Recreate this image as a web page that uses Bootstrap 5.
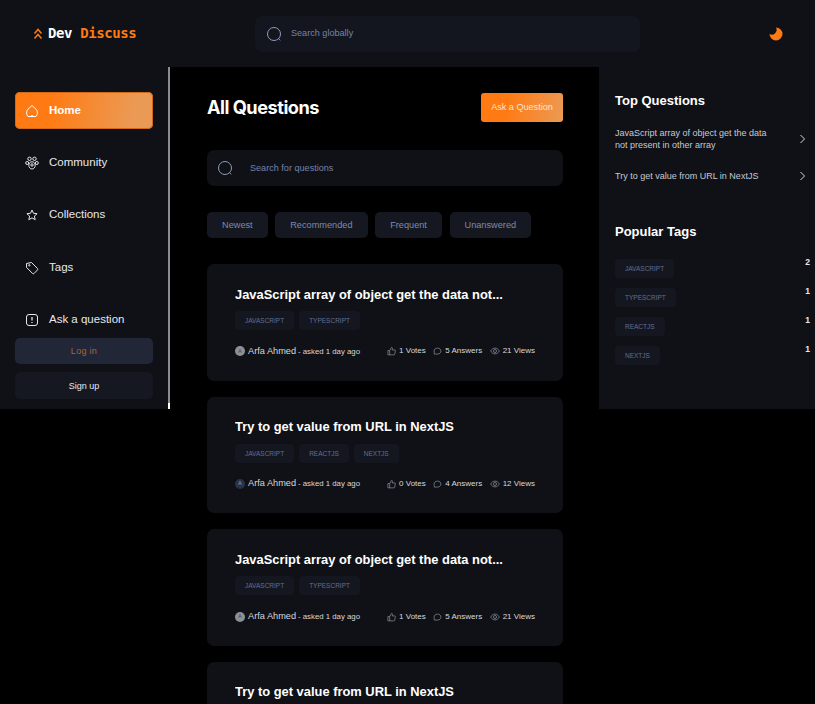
<!DOCTYPE html>
<html lang="en">

<head>
  <meta charset="UTF-8" />
  <meta name="viewport" content="width=device-width, initial-scale=1" />
  <title>Dev Discuss</title>
  <link href="https://cdn.jsdelivr.net/npm/bootstrap@5.3.0/dist/css/bootstrap.min.css" rel="stylesheet" />
  <style>
    body {
      background-color: #000;
      color: #fff;
      font-family: "Liberation Sans", Arial, sans-serif;
      overflow: hidden;
      height: 704px;
    }

    .topbar {
      height: 67px;
      background-color: #0f1117;
      padding-left: 33px;
    }

    .logo-box {
      width: 222px;
      gap: 5px;
      font-family: "DejaVu Sans Mono", monospace;
      font-weight: 700;
      font-size: 14px;
      letter-spacing: -.4px;
    }

    .accent-text {
      color: #ff7a12;
    }

    .global-search {
      width: 385px;
      height: 36px;
      border-radius: 7px;
      background-color: #13161f;
      padding-left: 11px;
      gap: 9px;
    }

    .search-hint {
      font-size: 9.1px;
      color: #7482aa;
    }

    .moon-box {
      margin-left: 129px;
    }

    .side-left {
      width: 170px;
      height: 342px;
      flex: none;
      background-color: #0f1117;
      border-right: 2px solid #8b8c91;
      border-image: linear-gradient(#8b8c91 98%, #fff 98%) 1;
      padding: 25px 15px 0;
    }

    .side-link {
      height: 37px;
      margin-bottom: 15px;
      padding-left: 10px;
      gap: 10px;
      font-size: 11.5px;
      color: #e6e8ee;
      border-radius: 5px;
    }

    .side-link.is-active {
      background: linear-gradient(100deg, #ff7a12 25%, #eb9a55 85%);
      color: #fff;
      font-weight: 700;
      box-shadow: inset 0 0 0 1px #d06a18;
    }

    .side-link.tags-link {
      margin-top: 16px;
    }

    .side-link.last-link {
      margin-bottom: 0;
    }

    .auth-btn {
      font-size: 9px;
      border-radius: 5px;
      height: 26px;
      padding: 0;
      border: 0;
      line-height: 26px;
    }

    .auth-login {
      background-color: #212736;
      color: #a8643a;
      letter-spacing: .3px;
      margin-bottom: 8px;
    }

    .auth-signup {
      background-color: #151821;
      color: #e6e8ee;
      height: 27px;
    }

    .main-col {
      width: 429px;
      flex: none;
      padding: 26px 36px 0 37px;
    }

    .page-title {
      font-family: Inter, sans-serif;
      font-size: 18.2px;
      font-weight: 700;
      letter-spacing: -.5px;
      margin: 1px 0 0;
    }

    .ask-btn {
      width: 82px;
      height: 29px;
      padding: 0;
      border: 0;
      border-radius: 3px;
      font-size: 9.1px;
      color: #fde3cc;
      background: linear-gradient(100deg, #ff7a12 30%, #eb9a55 100%);
    }

    .question-search {
      height: 36px;
      border-radius: 7px;
      background-color: #0f1117;
      margin-top: 28px;
      padding-left: 10px;
      gap: 17px;
    }

    .question-search .search-hint {
      padding-top: 2px;
    }

    .filter-row {
      margin-top: 26px;
      margin-bottom: 26px;
      gap: 7.6px;
    }

    .filter-chip {
      height: 26px;
      line-height: 26px;
      padding: 0 15px;
      border-radius: 5px;
      background-color: #151821;
      color: #7f8aa8;
      font-size: 9.2px;
    }

    .question-item {
      height: 116.67px;
      background-color: #0f1117;
      border: 0;
      border-radius: 7px;
      margin-bottom: 16px;
      padding: 21.5px 28px 0;
      color: #fff;
    }

    .question-title {
      font-size: 12.9px;
      font-weight: 700;
      line-height: 18px;
      margin: 0 0 7.5px;
    }

    .tag-chip {
      display: inline-block;
      height: 19px;
      line-height: 19px;
      padding: 0 10px;
      border-radius: 4px;
      background-color: #141720;
      color: #636e92;
      font-size: 6.5px;
      text-transform: uppercase;
    }

    .tag-line {
      gap: 5px;
    }

    .meta-row {
      margin-top: 14.5px;
      font-size: 7.8px;
      color: #d6d8de;
    }

    .avatar-dot {
      width: 10px;
      height: 10px;
      border-radius: 50%;
      background-color: #8d9098;
      color: #3c3f47;
      font-size: 5px;
      margin-right: 3px;
    }

    .avatar-dark {
      background-color: #2c3244;
      color: #9aa3bb;
    }

    .author-name {
      font-size: 9.2px;
      margin-right: 2px;
    }

    .stat-group {
      gap: 7.5px;
      font-size: 8px;
    }

    .stat-item {
      gap: 3px;
    }

    .side-right {
      width: 216px;
      height: 342px;
      flex: none;
      background-color: #0f1117;
      padding: 25px 5px 0 16px;
    }

    .side-heading {
      font-size: 13px;
      font-weight: 700;
      line-height: 17px;
      margin: 0;
    }

    .top-link {
      font-size: 9px;
      line-height: 12px;
      color: #c6c9d2;
      padding-right: 4px;
    }

    .top-link span {
      width: 165px;
    }

    .top-first {
      margin-top: 18px;
    }

    .top-second {
      margin-top: 19px;
    }

    .popular-heading {
      margin-top: 41px;
    }

    .count-num {
      font-size: 8.5px;
      line-height: 12px;
      color: #e6e8ee;
      font-weight: 700;
      margin-top: -3px;
    }

    .pop-row {
      height: 18px;
      margin-bottom: 11px;
    }

    .pop-first {
      margin-top: 19px;
    }
  </style>
</head>

<body>
  <header class="topbar d-flex align-items-center">
    <div class="logo-box d-flex align-items-center">
      <svg width="10" height="12" viewBox="0 0 10 12" fill="none" stroke="#ff7a12" stroke-width="1.5">
        <path d="M1.5 5.5 5 1.5l3.5 4M1.5 10.5 5 6.5l3.5 4" />
      </svg>
      <span>Dev <span class="accent-text">Discuss</span></span>
    </div>
    <div class="global-search d-flex align-items-center">
      <svg width="16" height="16" viewBox="0 0 16 16" fill="none" stroke="#8d9bb8" stroke-width="1">
        <circle cx="8" cy="8" r="6.5" />
        <path d="m12.6 12.6 1.6 1.8" />
      </svg>
      <span class="search-hint">Search globally</span>
    </div>
    <div class="moon-box d-flex">
      <svg width="14" height="14" viewBox="0 0 14 14">
        <path fill="#ff7a12" d="M7 .5A6.500 6.500 0 1 1 .5 7 4.800 4.800 0 0 0 7 .5Z" />
      </svg>
    </div>
  </header>

  <div class="d-flex align-items-start">
    <aside class="side-left">
      <div class="side-link is-active d-flex align-items-center">
        <svg width="14" height="14" viewBox="0 0 14 14" fill="none" stroke="#fff" stroke-width="1">
          <path d="M7 1.500 11.800 6c1 2.500.6 5-.8 6.500H3C1.600 11 1.200 8.500 2.200 6ZM5.500 12.300c.5-.9 2.500-.9 3 0" />
        </svg>
        <span>Home</span>
      </div>
      <div class="side-link d-flex align-items-center">
        <svg width="14" height="14" viewBox="0 0 14 14" fill="none" stroke="#e6e8ee" stroke-width="1">
          <circle cx="4.500" cy="2.800" r="1.700" />
          <circle cx="9.500" cy="2.800" r="1.700" />
          <circle cx="2.200" cy="7" r="1.500" />
          <circle cx="11.800" cy="7" r="1.500" />
          <path d="M7 5.800c2 0 3.200 1.500 3.200 3.500S8.900 13 7 13 3.800 11.300 3.800 9.300 5 5.800 7 5.800Z" />
          <circle cx="7" cy="9" r="1.200" />
        </svg>
        <span>Community</span>
      </div>
      <div class="side-link d-flex align-items-center mb-0">
        <svg width="14" height="14" viewBox="0 0 14 14" fill="none" stroke="#e6e8ee" stroke-width="1">
          <path d="m7 2 1.500 3.300 3.600.4-2.700 2.400.8 3.600L7 9.900l-3.200 1.800.8-3.600-2.700-2.400 3.600-.4Z" />
        </svg>
        <span>Collections</span>
      </div>
      <div class="side-link tags-link d-flex align-items-center">
        <svg width="14" height="14" viewBox="0 0 14 14" fill="none" stroke="#e6e8ee" stroke-width="1">
          <path d="M1.500 2.500 6.500 1.500l6 6a1 1 0 0 1 0 1.400L9 12.500a1 1 0 0 1-1.400 0l-6-6Z" />
          <circle cx="4.300" cy="4.300" r=".7" />
        </svg>
        <span>Tags</span>
      </div>
      <div class="side-link last-link d-flex align-items-center">
        <svg width="14" height="14" viewBox="0 0 14 14" fill="none" stroke="#e6e8ee" stroke-width="1">
          <rect x="1.500" y="1.500" width="11" height="11" rx="2.500" />
          <path d="M7 4v3.500M7 9v1" stroke-width="1.300" />
        </svg>
        <span>Ask a question</span>
      </div>
      <button class="btn auth-btn auth-login w-100 d-block">Log in</button>
      <button class="btn auth-btn auth-signup w-100 d-block">Sign up</button>
    </aside>

    <main class="main-col">
      <div class="d-flex justify-content-between align-items-center">
        <h1 class="page-title">All Questions</h1>
        <button class="btn ask-btn">Ask a Question</button>
      </div>

      <div class="question-search d-flex align-items-center">
        <svg width="16" height="16" viewBox="0 0 16 16" fill="none" stroke="#8d9bb8" stroke-width="1">
          <circle cx="8" cy="8" r="6.500" />
          <path d="m12.600 12.600 1.600 1.800" />
        </svg>
        <span class="search-hint">Search for questions</span>
      </div>

      <div class="filter-row d-flex">
        <div class="filter-chip">Newest</div>
        <div class="filter-chip">Recommended</div>
        <div class="filter-chip">Frequent</div>
        <div class="filter-chip">Unanswered</div>
      </div>

      <div id="question-list"></div>
    </main>

    <aside class="side-right">
      <h2 class="side-heading">Top Questions</h2>
      <div class="top-link top-first d-flex justify-content-between align-items-center">
        <span>JavaScript array of object get the data not present in other array</span>
        <svg width="7" height="10" viewBox="0 0 7 10" fill="none" stroke="#d6d8de" stroke-width="1">
          <path d="m1.500 1 4 4-4 4" />
        </svg>
      </div>
      <div class="top-link top-second d-flex justify-content-between align-items-center">
        <span>Try to get value from URL in NextJS</span>
        <svg width="7" height="10" viewBox="0 0 7 10" fill="none" stroke="#d6d8de" stroke-width="1">
          <path d="m1.500 1 4 4-4 4" />
        </svg>
      </div>

      <h2 class="side-heading popular-heading">Popular Tags</h2>
      <div class="pop-row pop-first d-flex justify-content-between align-items-start">
        <span class="tag-chip">javascript</span><span class="count-num">2</span>
      </div>
      <div class="pop-row d-flex justify-content-between align-items-start">
        <span class="tag-chip">typescript</span><span class="count-num">1</span>
      </div>
      <div class="pop-row d-flex justify-content-between align-items-start">
        <span class="tag-chip">reactjs</span><span class="count-num">1</span>
      </div>
      <div class="pop-row d-flex justify-content-between align-items-start">
        <span class="tag-chip">nextjs</span><span class="count-num">1</span>
      </div>
    </aside>
  </div>

  <script>
    const preguntas = [
      { title: "JavaScript array of object get the data not...", tags: ["javascript", "typescript"], votes: 1, answers: 5, views: 21, dark: false },
      { title: "Try to get value from URL in NextJS", tags: ["javascript", "reactjs", "nextjs"], votes: 0, answers: 4, views: 12, dark: true },
      { title: "JavaScript array of object get the data not...", tags: ["javascript", "typescript"], votes: 1, answers: 5, views: 21, dark: false },
      { title: "Try to get value from URL in NextJS", tags: ["javascript", "reactjs", "nextjs"], votes: 0, answers: 4, views: 12, dark: true }
    ];

    const iconThumb = `<svg width="9" height="10" viewBox="0 0 10 10" fill="none" stroke="#8d909a" stroke-width=".8"><path d="M1 4.500h2v4.800H1ZM3 4.500 5 1c1 0 1.300.7 1 1.500L5.700 3.800h3c.5 0 .7.400.6.800L8.500 8.700c-.1.400-.4.600-.8.600H3"/></svg>`;
    const iconChat = `<svg width="9" height="10" viewBox="0 0 10 10" fill="none" stroke="#8d909a" stroke-width=".8"><path d="M5 1.800c2.200 0 3.800 1.400 3.800 3.300S7.200 8.400 5 8.400H1.300c.3-.6.200-1.200 0-1.800-.1-.5-.1-1-.1-1.500 0-1.900 1.600-3.300 3.800-3.300Z"/></svg>`;
    const iconEye = `<svg width="10" height="10" viewBox="0 0 11 10" fill="none" stroke="#8d909a" stroke-width=".8"><path d="M.7 5c1.200-2.200 3-3.200 4.800-3.200S9.100 2.800 10.300 5C9.100 7.200 7.300 8.200 5.500 8.200S1.900 7.200.7 5Z"/><circle cx="5.500" cy="5" r="1.700"/></svg>`;

    document.getElementById("question-list").innerHTML = preguntas.map(q => `
      <div class="card question-item">
        <h3 class="question-title text-truncate">${q.title}</h3>
        <div class="tag-line d-flex">${q.tags.map(t => `<span class="tag-chip">${t}</span>`).join("")}</div>
        <div class="meta-row d-flex justify-content-between align-items-center">
          <div class="d-flex align-items-center">
            <span class="avatar-dot d-inline-flex align-items-center justify-content-center ${q.dark ? "avatar-dark" : ""}">A</span>
            <span class="author-name">Arfa Ahmed</span>
            <span>- asked 1 day ago</span>
          </div>
          <div class="stat-group d-flex align-items-center">
            <span class="stat-item d-flex align-items-center">${iconThumb}${q.votes} Votes</span>
            <span class="stat-item d-flex align-items-center">${iconChat}${q.answers} Answers</span>
            <span class="stat-item d-flex align-items-center">${iconEye}${q.views} Views</span>
          </div>
        </div>
      </div>`).join("");
  </script>
  <script src="https://cdn.jsdelivr.net/npm/bootstrap@5.3.0/dist/js/bootstrap.bundle.min.js"></script>
</body>

</html>
